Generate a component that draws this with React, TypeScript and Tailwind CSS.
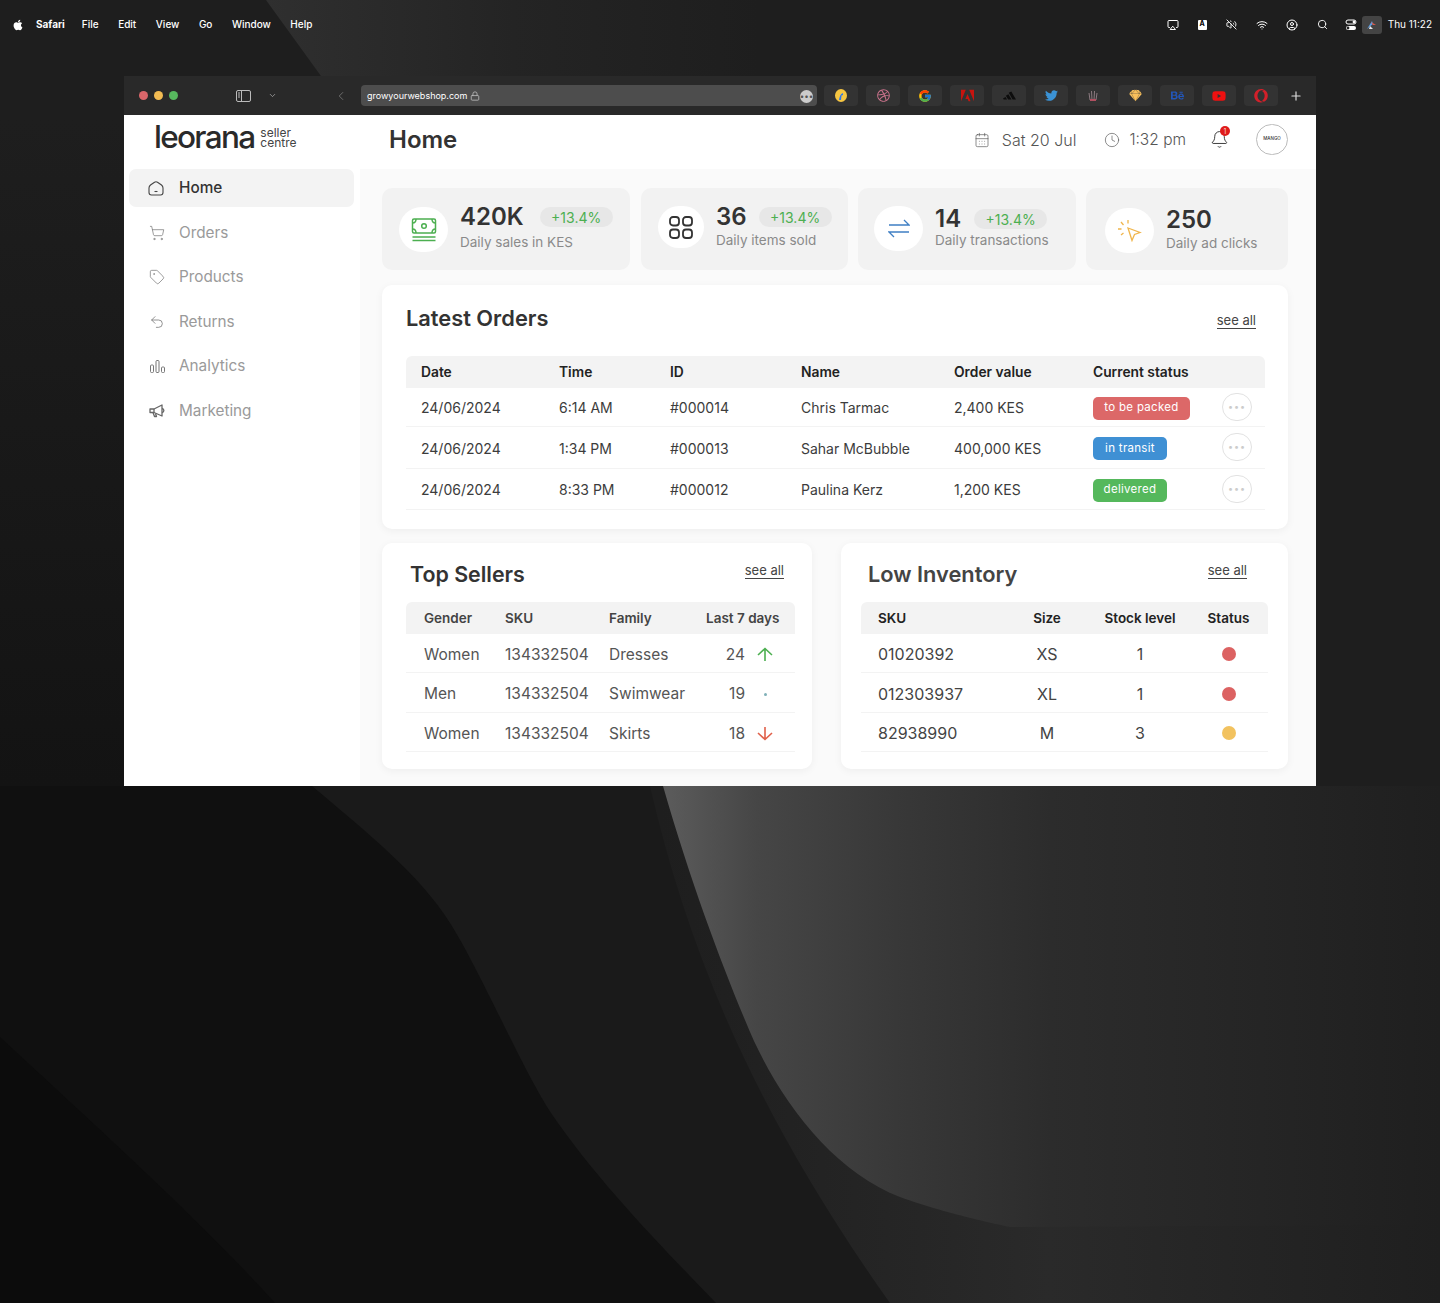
import React from "react";
import { ShoppingCart, Tag, Undo2, CalendarDays, Clock, Bell, Airplay, VolumeOff, Wifi, CircleUser, Search, ChevronDown, ChevronLeft, Plus, Lock } from "lucide-react";
import { FaApple, FaTwitter, FaSketch, FaBehance, FaYoutube, FaOpera, FaDribbble } from "react-icons/fa";
import { FcGoogle } from "react-icons/fc";
import { SiAdobe, SiAdidas } from "react-icons/si";

function Wallpaper() {
  return (
    <svg className="absolute inset-0" width="1440" height="1303" viewBox="0 0 1440 1303">
      <defs>
        <linearGradient id="wedge" x1="266" x2="760" y1="0" y2="0" gradientUnits="userSpaceOnUse">
          <stop offset="0" stopColor="#2f2f2f" />
          <stop offset="0.5" stopColor="#242424" />
          <stop offset="1" stopColor="#1e1e1e" />
        </linearGradient>
        <linearGradient id="light" x1="663" x2="1440" y1="0" y2="0" gradientUnits="userSpaceOnUse">
          <stop offset="0" stopColor="#5c5c5c" />
          <stop offset="0.12" stopColor="#464646" />
          <stop offset="0.3" stopColor="#383838" />
          <stop offset="0.5" stopColor="#2c2c2c" />
          <stop offset="1" stopColor="#1f1f1f" />
        </linearGradient>
        <linearGradient id="lower" x1="660" x2="1440" y1="0" y2="0" gradientUnits="userSpaceOnUse">
          <stop offset="0" stopColor="#1e1e1e" />
          <stop offset="0.5" stopColor="#2a2a2a" />
          <stop offset="1" stopColor="#1f1f1f" />
        </linearGradient>
        <linearGradient id="edge" x1="0" x2="0" y1="120" y2="786" gradientUnits="userSpaceOnUse">
          <stop offset="0" stopColor="#1e1e1e" />
          <stop offset="1" stopColor="#131313" />
        </linearGradient>
      </defs>
      <rect width="1440" height="1303" fill="#1e1e1e" />
      <path d="M266 0 L321 76 L1000 76 L1000 0 Z" fill="url(#wedge)" />
      <rect x="0" y="120" width="124" height="666" fill="url(#edge)" />
      <rect x="0" y="786" width="1440" height="517" fill="#1a1a1a" />
      <path d="M650 786 C 690 960 760 1120 890 1303 L1440 1303 L1440 786 Z" fill="url(#lower)" />
      <path d="M663 786 C 690 880 720 960 745 1020 C 775 1095 830 1170 900 1197 C 950 1215 1010 1227 1010 1227 L1440 1225 L1440 786 Z" fill="url(#light)" />
      <path d="M0 786 L312 786 C 370 835 420 875 450 923 C 480 970 520 1065 551 1113 C 600 1185 670 1255 716 1303 L0 1303 Z" fill="#101010" />
      <path d="M0 1037 C 100 1130 200 1220 275 1303 L0 1303 Z" fill="#0c0c0c" />
    </svg>
  );
}

function ControlCenter() {
  return (
    <svg width="12" height="12" viewBox="0 0 12 12">
      <rect x="1" y="1" width="10" height="4" rx="2" fill="none" stroke="#fff" />
      <circle cx="9" cy="3" r="1.4" fill="#fff" />
      <rect x="1" y="7" width="10" height="4" rx="2" fill="#fff" />
      <circle cx="3" cy="9" r="1.4" fill="#222" />
    </svg>
  );
}

function MenuBar() {
  return (
    <div className="relative flex h-[48px] items-center pl-[12px] pr-[8px] pt-[1px] text-[10px] font-medium text-white">
      <FaApple size={12} />
      <span className="ml-[12px] font-bold">Safari</span>
      <div className="ml-[17px] flex gap-[19.5px]">
        <span>File</span>
        <span>Edit</span>
        <span>View</span>
        <span>Go</span>
        <span>Window</span>
        <span>Help</span>
      </div>
      <div className="ml-auto flex items-center">
        <Airplay size={12} />
        <span className="ml-[19px] flex h-[10px] w-[9px] items-center justify-center rounded-[1px] bg-white text-[7px] font-bold text-black">A</span>
        <VolumeOff size={11} className="ml-[19px]" />
        <Wifi size={12} className="ml-[19px]" />
        <CircleUser size={12} className="ml-[18px]" />
        <Search size={11} className="ml-[19px]" />
        <span className="ml-[17px]"><ControlCenter /></span>
        <span className="ml-[5px] flex h-[18px] w-[20px] items-center justify-center rounded-[3px] bg-[#444]">
          <svg width="11" height="11" viewBox="0 0 11 11"><path d="M1 10 L6 2 L7 5 Z" fill="#5b9be0" /><path d="M5 3 L10 6 L7 6 Z" fill="#e05a4a" /><path d="M4 7 L7 10 L3 10 Z" fill="#e8e8e8" /></svg>
        </span>
        <span className="ml-[6px] text-[10px] font-normal">Thu 11:22</span>
      </div>
    </div>
  );
}

function Tile({ children }: { children: React.ReactNode }) {
  return <div className="flex h-[21px] w-[34px] items-center justify-center rounded-[4px] bg-[#333333]">{children}</div>;
}

function Toolbar() {
  return (
    <div className="flex h-[39px] items-center bg-[#292929] pl-[15px] text-[#aaa]">
      <div className="flex gap-[6px]">
        <span className="h-[9px] w-[9px] rounded-full bg-[#d9666a]" />
        <span className="h-[9px] w-[9px] rounded-full bg-[#f2bb52]" />
        <span className="h-[9px] w-[9px] rounded-full bg-[#57b75e]" />
      </div>
      <svg className="ml-[58px]" width="15" height="12" viewBox="0 0 15 12" fill="none" stroke="#bbb"><rect x="0.5" y="0.5" width="14" height="11" rx="1.5" /><path d="M5.5 0.5v11" /><path d="M2 3h2M2 5h2M2 7h2" /></svg>
      <ChevronDown size={9} className="ml-[17px]" />
      <ChevronLeft size={14} strokeWidth={1.2} className="ml-[57px] text-[#888]" />
      <div className="ml-[13px] flex h-[21px] w-[456px] items-center rounded-[4px] bg-[#4d4d4d] pl-[6px] pr-[4px] pt-[1px] text-[9px] text-white">
        <span>growyourwebshop.com</span>
        <Lock size={10} className="ml-[3px] text-[#bbb]" />
        <span className="ml-auto flex h-[13px] w-[13px] items-center justify-center rounded-full bg-[#ccc] text-[8px] leading-none text-[#555]">•••</span>
      </div>
      <div className="ml-[7px] flex gap-[8px]">
        <Tile>
          <svg width="12" height="13" viewBox="0 0 12 13"><ellipse cx="6" cy="6.5" rx="6" ry="6.5" fill="#f5c542" /><path d="M4 11 C5 6 6 5 8 4 L8 6 L6.5 6.5 L6 11 Z" fill="#2874f0" /></svg>
        </Tile>
        <Tile><FaDribbble size={13} color="#c9728b" /></Tile>
        <Tile><FcGoogle size={14} /></Tile>
        <Tile><SiAdobe size={13} color="#c8140f" /></Tile>
        <Tile><SiAdidas size={13} color="#0d0d0d" /></Tile>
        <Tile><FaTwitter size={13} color="#3b93d6" /></Tile>
        <Tile>
          <svg width="10" height="12" viewBox="0 0 10 12" fill="none" stroke="#8c7a80"><path d="M2 10 L1 3 M4 10 L3.5 1 M6 10 L6.5 1 M8 10 L9 3" /><path d="M2 10 H8" stroke="#b05060" strokeWidth="2" /></svg>
        </Tile>
        <Tile><FaSketch size={13} color="#f9c05c" /></Tile>
        <Tile><FaBehance size={13} color="#2356b8" /></Tile>
        <Tile><FaYoutube size={14} color="#ee1010" /></Tile>
        <Tile><FaOpera size={14} color="#d3202a" /></Tile>
      </div>
      <Plus size={14} className="ml-[11px] text-[#ddd]" />
    </div>
  );
}

function HomeIcon() {
  return <svg width="16" height="15" viewBox="0 0 16 15" fill="none" stroke="#444" strokeWidth="1.1"><path d="M1 7 C1 5.5 1.5 4.8 2.5 4 L6.5 1.2 C7.5 .6 8.5 .6 9.5 1.2 L13.5 4 C14.5 4.8 15 5.5 15 7 V11.5 C15 13 14 14 12.5 14 H3.5 C2 14 1 13 1 11.5 Z" /><path d="M6.5 10.5 H9.5" /></svg>;
}
function BarsIcon() {
  return <svg width="15" height="13" viewBox="0 0 15 13" fill="none" stroke="#777"><rect x="0.5" y="5" width="3" height="7.5" rx="1" /><rect x="6" y="0.5" width="3" height="12" rx="1" /><rect x="11.5" y="7" width="3" height="5.5" rx="1" /></svg>;
}
function HornIcon() {
  return <svg width="16" height="14" viewBox="0 0 16 14" fill="none" stroke="#666" strokeWidth="1.3" strokeLinejoin="round"><path d="M1 5 L1 8.5 L5 8.5 L13 12 L13 1 L5 5 Z" /><path d="M5 5 V8.5" /><path d="M13 4.5 C15.5 5 15.5 8 13 8.5" /><path d="M4 8.5 L5.5 12.5 H7.5 L6.5 9.5" /></svg>;
}

const navItems: [string, React.ReactNode][] = [
  ["Orders", <ShoppingCart size={16} strokeWidth={1.1} />],
  ["Products", <Tag size={16} strokeWidth={1.1} />],
  ["Returns", <Undo2 size={16} strokeWidth={1.2} />],
  ["Analytics", <BarsIcon />],
  ["Marketing", <HornIcon />],
];

function Sidebar() {
  return (
    <nav className="flex w-[236px] shrink-0 flex-col gap-[6.5px] pl-[5px] pr-[6px] text-[15.3px]">
      <div className="flex h-[38px] items-center rounded-[7px] bg-[#f3f3f3] pl-[19px] font-medium text-[#333]">
        <HomeIcon />
        <span className="ml-[15px] pt-[1px]">Home</span>
      </div>
      {navItems.map(([label, icon]) => (
        <div key={label} className="flex h-[38px] items-center pl-[20px] text-[#9a9a9a]">
          <span className="flex w-[16px] justify-center text-[#777]">{icon}</span>
          <span className="ml-[14px] pt-[1px]">{label}</span>
        </div>
      ))}
    </nav>
  );
}

function Header() {
  return (
    <header className="flex h-[54px] items-center pb-[5px] pr-[28px]">
      <div className="-mt-[6px] flex w-[265px] shrink-0 items-center pl-[30px]">
        <span className="text-[31.5px] font-medium leading-none tracking-[-1.7px] text-[#2a2a2a]">leorana</span>
        <span className="ml-[6px] mt-[3px] text-[12px] leading-[10px] text-[#444]">seller<br />centre</span>
      </div>
      <h1 className="text-[24px] font-semibold text-[#333]">Home</h1>
      <div className="ml-auto flex items-center text-[15.5px] font-light text-[#555]">
        <CalendarDays size={16} strokeWidth={1} />
        <span className="ml-[12px] text-[16px]">Sat 20 Jul</span>
        <Clock size={16} strokeWidth={1} className="ml-[28px]" />
        <span className="ml-[9px]">1:32 pm</span>
        <span className="relative ml-[24px] flex">
          <Bell size={19} strokeWidth={1.1} className="text-[#222]" />
          <span className="absolute -right-[1px] -top-[4px] flex h-[10px] w-[10px] items-center justify-center rounded-full bg-[#e01b1b] text-[7px] leading-none text-white">1</span>
        </span>
        <span className="ml-[27px] flex h-[31px] w-[32px] items-center justify-center rounded-full border border-[#bbb] text-[4.5px] font-medium text-[#333]">MANGO</span>
      </div>
    </header>
  );
}

function MoneyIcon() {
  return <svg width="26" height="24" viewBox="0 0 26 24" fill="none" stroke="#4caf50" strokeWidth="1.5"><rect x="1.5" y="1" width="23" height="14" rx="1.5" /><circle cx="13" cy="8" r="2.3" /><path d="M1.5 5 C4 5 5 4 5 1 M24.5 5 C22 5 21 4 21 1 M1.5 11 C4 11 5 12 5 15 M24.5 11 C22 11 21 12 21 15" /><path d="M1.5 19 H24.5 M1.5 22.5 H24.5" /></svg>;
}
function GridIcon() {
  return <svg width="24" height="23" viewBox="0 0 24 23" fill="none" stroke="#333" strokeWidth="1.8"><rect x="1" y="1" width="9" height="8.5" rx="3" /><rect x="14" y="1" width="9" height="8.5" rx="3" /><rect x="1" y="13.5" width="9" height="8.5" rx="3" /><rect x="14" y="13.5" width="9" height="8.5" rx="3" /></svg>;
}
function SwapIcon() {
  return <svg width="22" height="19" viewBox="0 0 22 19" fill="none" stroke="#3f7fc4" strokeWidth="1.3"><path d="M1 6 H21 L16 1" /><path d="M21 13 H1 L6 18" /></svg>;
}
function ClickIcon() {
  return <svg width="25" height="23" viewBox="0 0 25 23" fill="none" stroke="#f0b54b" strokeWidth="1.3"><path d="M11 9 L23 13.5 L17.5 15.5 L15 21.5 Z" /><path d="M11 1 V4.5 M4 3 L6.5 6 M1 10 H4.5 M4 16 L6.5 14" /></svg>;
}

function Pill() {
  return <span className="flex h-[20px] w-[73px] items-center justify-center rounded-full bg-[#e7e7e7] text-[14px] text-[#4caf50]">+13.4%</span>;
}

function Stats() {
  const value = "text-[24px] font-semibold leading-[30px] text-[#333]";
  const sub = "text-[13.5px] leading-[20px] text-[#8a8a8a]";
  const circle = "flex shrink-0 items-center justify-center rounded-full bg-white";
  const card = "flex h-[82px] rounded-[10px] bg-[#f2f2f2]";
  return (
    <div className="flex gap-[10px]">
      <div className={`${card} w-[248px] pl-[17px]`}>
        <div className={`${circle} mt-[19px] h-[45px] w-[49px]`}><MoneyIcon /></div>
        <div className="ml-[12px] mt-[14px]">
          <div className="flex items-center gap-[16px]"><span className={value}>420K</span><Pill /></div>
          <div className={sub}>Daily sales in KES</div>
        </div>
      </div>
      <div className={`${card} ml-[1px] w-[207px] pl-[17px]`}>
        <div className={`${circle} mt-[18px] h-[42px] w-[46px]`}><GridIcon /></div>
        <div className="ml-[12px] mt-[14px]">
          <div className="flex items-center gap-[12px]"><span className={value}>36</span><Pill /></div>
          <div className={`${sub} -mt-[2px]`}>Daily items sold</div>
        </div>
      </div>
      <div className={`${card} w-[218px] pl-[16px]`}>
        <div className={`${circle} mt-[18px] h-[45px] w-[49px]`}><SwapIcon /></div>
        <div className="ml-[12px] mt-[16px]">
          <div className="flex items-center gap-[13px]"><span className={value}>14</span><Pill /></div>
          <div className={`${sub} -mt-[4px]`}>Daily transactions</div>
        </div>
      </div>
      <div className={`${card} w-[202px] pl-[19px]`}>
        <div className={`${circle} mt-[20px] h-[45px] w-[49px]`}><ClickIcon /></div>
        <div className="ml-[12px] mt-[17px]">
          <div className={value}>250</div>
          <div className={`${sub} -mt-[2px]`}>Daily ad clicks</div>
        </div>
      </div>
    </div>
  );
}

function SeeAll() {
  return <span className="border-b border-[#444] text-[13px] leading-[15px] text-[#444]">see all</span>;
}

const card = "rounded-[10px] bg-white shadow-[0_2px_8px_rgba(0,0,0,0.05)]";
const orderCols = "grid grid-cols-[138px_111px_131px_153px_139px_129px_30px] items-center pl-[15px]";

const orders = [
  ["24/06/2024", "6:14 AM", "#000014", "Chris Tarmac", "2,400 KES", "to be packed", "w-[97px] bg-[#dc6868]", "h-[39px]"],
  ["24/06/2024", "1:34 PM", "#000013", "Sahar McBubble", "400,000 KES", "in transit", "w-[74px] bg-[#3f90d4]", "h-[42px]"],
  ["24/06/2024", "8:33 PM", "#000012", "Paulina Kerz", "1,200 KES", "delivered", "w-[74px] bg-[#55b85c]", "h-[41px]"],
];

function LatestOrders() {
  return (
    <section className={`${card} mt-[15px] h-[244px] pl-[24px] pr-[23px]`}>
      <div className="flex h-[71px] items-center justify-between pb-[5px] pr-[9px]">
        <h2 className="text-[21.8px] font-semibold text-[#333]">Latest Orders</h2>
        <span className="mt-[1px]"><SeeAll /></span>
      </div>
      <div className={`${orderCols} h-[32px] rounded-t-[6px] bg-[#f3f3f3] text-[13.8px] font-semibold text-[#222]`}>
        <span>Date</span><span>Time</span><span>ID</span><span>Name</span><span>Order value</span><span>Current status</span>
      </div>
      {orders.map((o) => (
        <div key={o[2]} className={`${orderCols} ${o[7]} border-b border-[#f3f3f3] pt-[1px] text-[14px] text-[#3c3c3c]`}>
          <span>{o[0]}</span><span>{o[1]}</span><span>{o[2]}</span><span>{o[3]}</span><span>{o[4]}</span>
          <span className={`${o[6]} mt-[1px] flex h-[23px] items-center justify-center rounded-[5px] text-[11.5px] tracking-[0.3px] text-white`}>{o[5]}</span>
          <span className="-mt-[2px] flex h-[28px] w-[30px] items-center justify-center rounded-full border border-[#e2e2e2] text-[9px] tracking-[1px] text-[#ccc]">•••</span>
        </div>
      ))}
    </section>
  );
}

function Arrow({ dir }: { dir: "up" | "down" }) {
  return dir === "up"
    ? <svg width="16" height="15" viewBox="0 0 16 15" fill="none" stroke="#4caf50" strokeWidth="1.6"><path d="M8 14 V1.5 M1 8 L8 1.5 L15 8" /></svg>
    : <svg width="16" height="15" viewBox="0 0 16 15" fill="none" stroke="#e0604a" strokeWidth="1.6"><path d="M8 1 V13.5 M1 7 L8 13.5 L15 7" /></svg>;
}

const sellerCols = "grid grid-cols-[81px_104px_97px_89px] items-center pl-[18px]";
const sellers: [string, string, string, string, React.ReactNode, string][] = [
  ["Women", "134332504", "Dresses", "24", <Arrow dir="up" />, "h-[39px]"],
  ["Men", "134332504", "Swimwear", "19", <span className="h-[3px] w-[3px] rounded-full bg-[#7fb0b8]" />, "h-[40px]"],
  ["Women", "134332504", "Skirts", "18", <Arrow dir="down" />, "h-[39px]"],
];

function TopSellers() {
  return (
    <section className={`${card} h-[226px] w-[430px] pl-[24px] pr-[17px]`}>
      <div className="flex h-[59px] items-center justify-between pl-[4px] pr-[11px] pt-[4px]">
        <h2 className="text-[21.4px] font-semibold text-[#333]">Top Sellers</h2>
        <span className="-mt-[11px]"><SeeAll /></span>
      </div>
      <div className={`${sellerCols} h-[32px] rounded-t-[6px] bg-[#f3f3f3] text-[13.5px] font-semibold text-[#444]`}>
        <span>Gender</span><span>SKU</span><span>Family</span><span>Last 7 days</span>
      </div>
      {sellers.map((s) => (
        <div key={s[2]} className={`${sellerCols} ${s[5]} border-b border-[#f3f3f3] pt-[3px] text-[15.5px] text-[#555]`}>
          <span>{s[0]}</span><span>{s[1]}</span><span>{s[2]}</span>
          <span className="flex items-center">
            <span className="w-[39px] text-right">{s[3]}</span>
            <span className="ml-[11px] flex w-[18px] justify-center">{s[4]}</span>
          </span>
        </div>
      ))}
    </section>
  );
}

const stockCols = "grid grid-cols-[132px_74px_112px_65px] items-center pl-[17px]";
const stock = [
  ["01020392", "XS", "1", "bg-[#dc6262]", "h-[39px]"],
  ["012303937", "XL", "1", "bg-[#dc6262]", "h-[40px]"],
  ["82938990", "M", "3", "bg-[#f2c25f]", "h-[39px]"],
];

function LowInventory() {
  return (
    <section className={`${card} ml-[29px] h-[226px] w-[447px] pl-[20px] pr-[20px]`}>
      <div className="flex h-[59px] items-center justify-between pl-[7px] pr-[21px] pt-[4px]">
        <h2 className="text-[21.8px] font-semibold text-[#444]">Low Inventory</h2>
        <span className="-mt-[11px]"><SeeAll /></span>
      </div>
      <div className={`${stockCols} h-[32px] rounded-t-[6px] bg-[#f3f3f3] text-[13.5px] font-semibold text-[#222]`}>
        <span>SKU</span><span className="text-center">Size</span><span className="text-center">Stock level</span><span className="text-center">Status</span>
      </div>
      {stock.map((s) => (
        <div key={s[0]} className={`${stockCols} ${s[4]} border-b border-[#f3f3f3] pt-[2px] text-[16px] text-[#444]`}>
          <span>{s[0]}</span><span className="text-center">{s[1]}</span><span className="text-center">{s[2]}</span>
          <span className="flex justify-center"><span className={`h-[14px] w-[14px] rounded-full ${s[3]}`} /></span>
        </div>
      ))}
    </section>
  );
}

export default function App() {
  return (
    <div className="relative h-[1303px] overflow-hidden [font-family:Inter,sans-serif]">
      <Wallpaper />
      <MenuBar />
      <div className="relative ml-[124px] mt-[28px] w-[1192px]">
        <Toolbar />
        <div className="h-[671px] bg-white">
          <Header />
          <div className="flex h-[617px]">
            <Sidebar />
            <main className="flex-1 bg-[#fafafa] pl-[22px] pr-[28px] pt-[19px]">
              <Stats />
              <LatestOrders />
              <div className="mt-[14px] flex">
                <TopSellers />
                <LowInventory />
              </div>
            </main>
          </div>
        </div>
      </div>
    </div>
  );
}
